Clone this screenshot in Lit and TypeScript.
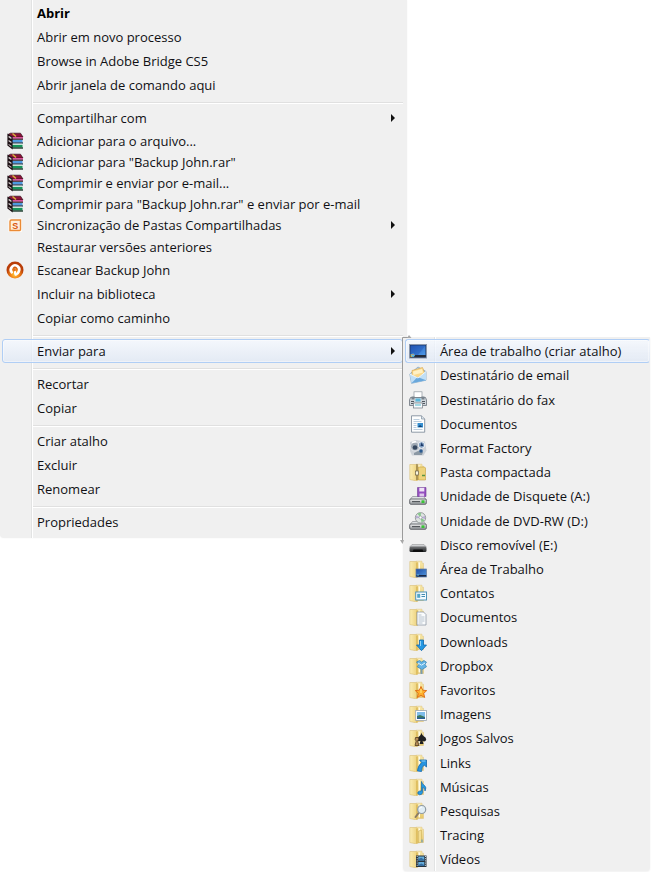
import { LitElement, html, svg, css, nothing } from "lit";
import { customElement, property } from "lit/decorators.js";
import { classMap } from "lit/directives/class-map.js";

interface Item {
  label: string;
  icon?: string;
  bold?: boolean;
  active?: boolean;
  arrow?: boolean;
  size?: "compact" | "medium";
}

const groups: Item[][] = [
  [
    { label: "Abrir", bold: true },
    { label: "Abrir em novo processo" },
    { label: "Browse in Adobe Bridge CS5" },
    { label: "Abrir janela de comando aqui" },
  ],
  [
    { label: "Compartilhar com", arrow: true },
    { label: "Adicionar para o arquivo...", icon: "rar", size: "compact" },
    { label: 'Adicionar para "Backup John.rar"', icon: "rar", size: "compact" },
    { label: "Comprimir e enviar por e-mail...", icon: "rar", size: "compact" },
    { label: 'Comprimir para "Backup John.rar" e enviar por e-mail', icon: "rar", size: "compact" },
    { label: "Sincronização de Pastas Compartilhadas", icon: "sync", arrow: true, size: "compact" },
    { label: "Restaurar versões anteriores", size: "medium" },
    { label: "Escanear Backup John", icon: "avast" },
    { label: "Incluir na biblioteca", arrow: true },
    { label: "Copiar como caminho" },
  ],
  [{ label: "Enviar para", arrow: true, active: true }],
  [{ label: "Recortar" }, { label: "Copiar" }],
  [{ label: "Criar atalho" }, { label: "Excluir" }, { label: "Renomear" }],
  [{ label: "Propriedades" }],
];

const sendTo: Item[] = [
  { label: "Área de trabalho (criar atalho)", icon: "desktop", active: true },
  { label: "Destinatário de email", icon: "mail" },
  { label: "Destinatário do fax", icon: "fax" },
  { label: "Documentos", icon: "document" },
  { label: "Format Factory", icon: "factory" },
  { label: "Pasta compactada", icon: "zip" },
  { label: "Unidade de Disquete (A:)", icon: "floppy" },
  { label: "Unidade de DVD-RW (D:)", icon: "dvd" },
  { label: "Disco removível (E:)", icon: "removable" },
  { label: "Área de Trabalho", icon: "f-desktop" },
  { label: "Contatos", icon: "f-contacts" },
  { label: "Documentos", icon: "f-documents" },
  { label: "Downloads", icon: "f-downloads" },
  { label: "Dropbox", icon: "f-dropbox" },
  { label: "Favoritos", icon: "f-favorites" },
  { label: "Imagens", icon: "f-pictures" },
  { label: "Jogos Salvos", icon: "f-games" },
  { label: "Links", icon: "f-links" },
  { label: "Músicas", icon: "f-music" },
  { label: "Pesquisas", icon: "f-search" },
  { label: "Tracing", icon: "f-plain" },
  { label: "Vídeos", icon: "f-videos" },
];

const gradient = (id: string, from: string, to: string, diagonal = false) => svg`
  <linearGradient id=${id} x1="0" y1="0" x2=${diagonal ? 1 : 0} y2="1">
    <stop offset="0" stop-color=${from} /><stop offset="1" stop-color=${to} />
  </linearGradient>`;

const folder = svg`
  <defs>
    ${gradient("fb", "#f8e9ac", "#e6c768")}
    <linearGradient id="ff"><stop offset="0" stop-color="#fbeeb4" /><stop offset="1" stop-color="#ecd07a" /></linearGradient>
  </defs>
  <path d="M7 1.200h6v2h1.500V16.500H7z" fill="url(#fb)" stroke="#dcc07a" stroke-width=".5" />
  <path d="M9.500 2.500h1.500V15.500H9.500z" fill="#fffbe6" />
  <path d="M.8 1.500h6l1.900 1.200V17.300L6.800 17.800.8 16.500z" fill="url(#ff)" stroke="#d4b666" stroke-width=".5" />
  <path d="M7 3l1.700-.4V17.300L7 17.600z" fill="#dfbf60" />`;

const drive = svg`
  <defs>${gradient("dr", "#f4f4f4", "#8e9296")}</defs>
  <path d="M3.500 9.500h11l3 3.500H.8z" fill="#dfe2e4" stroke="#8a8e92" stroke-width=".7" />
  <rect x=".7" y="12" width="16.600" height="5.300" rx="1.200" fill="url(#dr)" stroke="#5c6064" stroke-width=".9" />
  <path d="M3 14.700h8" stroke="#3c4044" stroke-width="1" />
  <rect x="12.500" y="13.300" width="3" height="2.700" fill="#39c437" />`;

const icons: Record<string, unknown> = {
  rar: svg`
    <path d="M2 2.500L4.500 1.200H14.500L17 5H6z" fill="#8e1238" stroke="#30101c" stroke-width=".7" />
    <path d="M6.500 1.500l3.500 3" stroke="#d8b13a" stroke-width="1.600" />
    <path d="M6 5h11v1.800H6z" fill="#d8549c" />
    <path d="M6 7.200h11" stroke="#241018" stroke-width="1.100" />
    <path d="M6 8h10.500v2.500H6z" fill="#4c9be0" />
    <path d="M6 11h11" stroke="#10203c" stroke-width="1.200" />
    <path d="M6 11.700h10.500v1.200H6z" fill="#d9ede0" />
    <path d="M6 12.900h10.500v2.500H6z" fill="#17945a" />
    <path d="M6 16h11" stroke="#0c2c1c" stroke-width="1.300" />
    <path d="M2 2.500v3.300L6 8.300V5zM2 6.700v3L6 12.300v-3zM2 10.800v2.500l4 3v-2.800z" fill="#cfc6c8" stroke="#1c1014" stroke-width="1.200" />`,
  sync: svg`
    <rect x="2.500" y="2.500" width="13.500" height="13.500" fill="#fffaf4" />
    <path d="M5.500 4H14.500V13.500Q14.500 14.500 13.500 14.500H4V5.500Q4 4 5.500 4z" fill="#fdeedd" stroke="#ea8a35" stroke-width="1.400" />
    <text x="9.300" y="12.600" text-anchor="middle" font-family="Liberation Sans, sans-serif" font-weight="700" font-size="9" fill="#d9560e">S</text>`,
  avast: svg`
    <defs><radialGradient id="av" cx=".5" cy=".75"><stop offset="0" stop-color="#ffd042" /><stop offset=".5" stop-color="#f48618" /><stop offset="1" stop-color="#b93d08" /></radialGradient></defs>
    <circle cx="9" cy="9" r="8.500" fill="url(#av)" />
    <path d="M5.800 11.300A4.200 4.200 0 1 1 12.800 10.500Q12 12.800 9.800 13.500" fill="none" stroke="#fff" stroke-width="2.600" stroke-linecap="round" />
    <path d="M9 8.500V12.500" stroke="#fff" stroke-width="2" stroke-linecap="round" />
    <circle cx="8.500" cy="8.700" r="1.500" fill="#e2701a" />`,
  desktop: svg`
    <defs>${gradient("ds", "#2457b4", "#4f9bea", true)}</defs>
    <rect x=".5" y="2.500" width="17" height="13.500" fill="#1a315c" stroke="#8b97ab" />
    <rect x="1.500" y="3.500" width="15" height="9.500" fill="url(#ds)" />
    <path d="M1.500 3.500h15L9 13H1.500z" fill="#1c4fb4" opacity=".4" />
    <path d="M1.500 13.200h15v2h-15z" fill="#252c38" />
    <path d="M1.500 12.500l1.500-.5v3H1.500z" fill="#e4b536" /><circle cx="4" cy="13.200" r="1.700" fill="#62c4e4" />
    <path d="M3 12.500l1.500-.8v1.600z" fill="#f06838" />`,
  mail: svg`
    <defs>${gradient("ml", "#e4f2fc", "#5e9fd4", true)}</defs>
    <path d="M.8 8L9 1l8 4.500v8.700L2.500 17.300z" fill="url(#ml)" stroke="#7a9ebc" stroke-width=".7" />
    <path d="M3 4.500L13.500 1.500l2 5L9.500 12 3 9.500z" fill="#fbd98c" stroke="#d6a348" stroke-width=".6" />
    <path d="M4 5.500l9-2.500 1 3.500L4.500 9z" fill="#fff1c4" />
    <path d="M.8 8l8.200 4L17 5.500v8.700L2.500 17.300z" fill="#c0dff6" />
    <path d="M2.500 17.300L8.500 11l8.500 3.200z" fill="#6aa8dc" />
    <path d="M.8 8l8.200 4L17 5.500" fill="none" stroke="#f4fbff" stroke-width=".9" />`,
  fax: svg`
    <rect x="5" y=".8" width="8" height="6" fill="#fff" stroke="#8e969e" stroke-width=".7" />
    <path d="M1.500 6.500h15l1 2.500v5.500H.5V9z" fill="#cfd5da" stroke="#6c757e" stroke-width=".8" />
    <path d="M2.500 5.500h3v3h-3zM12.500 5.500h3v3h-3z" fill="#79838d" />
    <rect x="6.500" y="7.500" width="5" height="3" fill="#59b8dc" />
    <path d="M2 10.500h3M13 10.500h3M2 12.500h14" stroke="#50575f" stroke-width="1.200" />
    <rect x="4.500" y="12" width="9" height="5" fill="#f7fafc" stroke="#717a84" stroke-width=".7" />
    <path d="M6 14h6" stroke="#53b7cb" />`,
  document: svg`
    <path d="M2.500.8h10l3.200 3.200v13.200H2.500z" fill="#fdfefe" stroke="#83909d" stroke-width=".9" />
    <path d="M12.500.8V4h3.200" fill="#dae2ea" stroke="#83909d" stroke-width=".7" />
    <path d="M4.500 4.500h6M4.500 6.500h8M4.500 8.500h3M4.500 10.500h3M4.500 12.500h3M4.500 14.500h9" stroke="#abc2d6" stroke-width=".8" />
    <rect x="8.500" y="8" width="5.500" height="4.500" fill="#358fd0" /><path d="M9 12l2-2 2.500 2z" fill="#123f71" />`,
  factory: svg`
    <path d="M1 3l6-2 9 1.500 1.500 9-3 5H3L1 12z" fill="#cdd2d8" />
    <circle cx="6" cy="7.500" r="4.500" fill="#9fa9b4" stroke="#e7eaee" />
    <circle cx="6" cy="8.500" r="2.300" fill="#34475f" />
    <circle cx="12.500" cy="6" r="3.300" fill="#7e9cc0" stroke="#eff2f5" />
    <path d="M12.500 3.500l2 3.500h-3z" fill="#1d3a67" />
    <path d="M5 14l4-2 5 1-1 3H5z" fill="#8b98a4" /><circle cx="12" cy="12" r="1.800" fill="#2b5b90" />
    <path d="M3 3.500l4-1" stroke="#fff" stroke-width="1.500" />`,
  zip: svg`${folder}
    <path d="M9.500 4h6l1 1v12h-7z" fill="#eed37b" stroke="#c29e3c" stroke-width=".6" />
    <path d="M8 1.500V17" stroke="#7b6b44" stroke-width="2" stroke-dasharray="1 1" />
    <rect x="6.600" y="8" width="3" height="4" fill="#f8f4dc" stroke="#6c6146" stroke-width=".7" />
    <path d="M13 12.500h3" stroke="#579346" stroke-width="1.500" />`,
  floppy: svg`${drive}
    <path d="M8.500.5h8.500V9.500h-8.500z" fill="#954fc0" stroke="#6e3a93" stroke-width=".6" />
    <path d="M10.300.8h5v3.700h-5z" fill="#efe4f6" /><path d="M10.500 6.500h4.600v3h-4.600z" fill="#dec8ec" />`,
  dvd: svg`${drive}
    <circle cx="11.500" cy="5.800" r="5.200" fill="#dfe4e2" stroke="#858c8c" stroke-width=".8" />
    <path d="M11.500 5.500L8.500 1.700A5 5 0 0 1 12 .9zM11.500 5.500l4 2.700a5 5 0 0 1-3 2z" fill="#87c98c" />
    <path d="M11.500 5.500l4.500-1.500v3zM11.500 5.500l-4.500 1v-3z" fill="#b8acd4" />
    <circle cx="11.500" cy="5.500" r="1.500" fill="#fff" stroke="#888f92" stroke-width=".6" />`,
  removable: svg`
    <defs>${gradient("rm", "#77797b", "#1f2123")}</defs>
    <path d="M3 8.500h12l2.300 2.500H.7z" fill="#cfd1d3" stroke="#97999b" stroke-width=".6" />
    <rect x=".5" y="10.500" width="17" height="5.500" rx="1.500" fill="url(#rm)" />
    <path d="M4.500 13.500h9l1 2.500h-11z" fill="#0c0d0e" />`,
  "f-plain": svg`${folder}<path d="M9.500 5l3-1v12l-3 1z" fill="#f3dd92" stroke="#cfb058" stroke-width=".6" /><path d="M13 13.500v3" stroke="#77a3b3" stroke-width="1.300" />`,
  "f-desktop": svg`${folder}<defs>${gradient("fd", "#1d4ca4", "#559ae0", true)}</defs><rect x="7" y="9" width="10.500" height="8" fill="url(#fd)" stroke="#62799f" stroke-width=".7" /><path d="M7.500 15.800h9.700" stroke="#1a2845" stroke-width="1.600" /><path d="M8 15h2" stroke="#67c0dc" />`,
  "f-contacts": svg`${folder}<rect x="6.700" y="8" width="10.800" height="8" fill="#f4fbff" stroke="#4e93b8" stroke-width="1" /><rect x="8.200" y="9.800" width="3" height="4" fill="#50a5c8" /><path d="M12.500 10.500h3.500M12.500 12.500h3.500" stroke="#438cb2" />`,
  "f-documents": svg`${folder}<path d="M8 4h6.500L17 6.500V17H8z" fill="#fafcfd" stroke="#909ba6" stroke-width=".8" /><path d="M9.500 7h3M9.500 9h6M9.500 11h6M9.500 13h6M9.500 15h4" stroke="#a7b5c1" stroke-width=".8" />`,
  "f-downloads": svg`${folder}<path d="M10.500 7h4v5h3l-5 5.700-5-5.700h3z" fill="#2698e2" stroke="#1269ae" stroke-width=".8" /><path d="M11.500 8v5" stroke="#8fd2fa" />`,
  "f-dropbox": svg`${folder}<path d="M7.500 5l3-1.500 2.200 1.600L15 3.500l2.500 1.700-1.500 2 1.500 2.500-4.500 3-4.800-3 1.800-2.200z" fill="#64b3e5" stroke="#347fae" stroke-width=".7" /><path d="M9 6l3.500 2.200L16 6" fill="none" stroke="#dff3ff" /><path d="M12.500 12v5" stroke="#7a9db0" stroke-width="2" />`,
  "f-favorites": svg`${folder}<path d="M12 5.500l1.700 3.700 4 .4-3 2.800 1 4.100-3.700-2.200-3.700 2.200 1-4.100-3-2.800 4-.4z" fill="#ffaf2b" stroke="#dd6913" stroke-width=".9" /><path d="M12 8v4" stroke="#ffe074" stroke-width="1.300" />`,
  "f-pictures": svg`${folder}<rect x="6.700" y="5.500" width="10.700" height="10" fill="#fff" stroke="#9ba5ae" stroke-width=".8" /><rect x="8" y="7" width="8" height="7" fill="#7ebcea" /><path d="M8 11l3-1 5 2v2H8z" fill="#3d7a5a" /><path d="M8 12.500h8V14H8z" fill="#275f98" />`,
  "f-games": svg`${folder}<path d="M12.500 3.500Q12.500 6 16.500 8.500 18 10.500 16.500 12 15 13 13.500 11.800L14.500 15h-4l1-3.200Q9 13 8 11.500 7.500 9.500 9 8.500 12.500 6 12.500 3.500z" fill="#1f2022" /><path d="M6.500 8.500h3v2l-1 1.500 1.500 4.500H6l1.200-4.500-1-1.500z" fill="#b58c58" stroke="#503b22" stroke-width=".8" />`,
  "f-links": svg`${folder}<path d="M10.500 6h7v7l-2.300-2Q12.500 13 12.500 17.500L8.500 17Q8.500 12 12.700 8.500z" fill="#2694e0" stroke="#1467aa" stroke-width=".8" /><path d="M12.500 7h4" stroke="#8dd0f7" />`,
  "f-music": svg`${folder}<path d="M12.500 3.500Q13 6 15.500 7.500 18 9.500 16 13 16 9.500 13.700 9.500V14.500Q13 17 10.500 16.800 8 16 9 14 10.500 12.500 12.500 13z" fill="#259be5" stroke="#1868a5" stroke-width=".7" />`,
  "f-search": svg`${folder}<path d="M10 10.500L6.500 15" stroke="#8b7b65" stroke-width="2" stroke-linecap="round" /><circle cx="12.700" cy="7.500" r="4" fill="#e0edf5" stroke="#8f9ba4" stroke-width="1.200" /><path d="M10.500 7q.5-2 2.500-2" fill="none" stroke="#fff" />`,
  "f-videos": svg`${folder}<rect x="7" y="5.500" width="10.500" height="11.500" fill="#28333c" /><path d="M9.300 6.500h6v4h-6zM9.300 12h6v4h-6z" fill="#67aedb" /><path d="M9.300 9l3-1.300 3 2v.8h-6zM9.300 15l3-1.500 3 1.500v1h-6z" fill="#346da0" /><path d="M8.200 6v11M16.500 6v11" stroke="#e3e9ec" stroke-width=".9" stroke-dasharray="1 1.200" />`,
};

@customElement("menu-item")
class MenuItem extends LitElement {
  @property({ attribute: false }) item!: Item;

  static styles = css`
    :host { display: block; }
    .row {
      display: grid;
      grid-template-columns: 18px minmax(0, 1fr) 8px;
      align-items: center;
      column-gap: 13px;
      box-sizing: border-box;
      width: 100%;
      height: 100%;
      padding: 0 5px 0 3px;
      border: 1px solid transparent;
      border-radius: 3px;
      background: none;
      color: #101014;
      font: 13px/18px "Open Sans", "Noto Sans", sans-serif;
      text-align: left;
      white-space: nowrap;
    }
    .active {
      border-color: #b0cef5;
      border-right-color: var(--row-end, #b0cef5);
      background: linear-gradient(rgba(245, 249, 255, 0.8), rgba(219, 230, 247, 0.6));
      box-shadow: inset 0 0 0 1px rgba(255, 255, 255, 0.4);
    }
    .bold { font-weight: 700; color: #000; }
    .icon { display: block; width: 18px; height: 18px; }
    .arrow { display: block; width: 8px; height: 8px; }
  `;

  render() {
    const { label, icon, bold, active, arrow } = this.item;
    return html`<button
      class=${classMap({ row: true, bold: !!bold, active: !!active })}
      role="menuitem"
      aria-haspopup=${arrow ? "menu" : nothing}
    >
      <svg class="icon" viewBox="0 0 18 18" aria-hidden="true">${icon ? icons[icon] : nothing}</svg>
      <span>${label}</span>
      ${arrow ? html`<svg class="arrow" viewBox="0 0 8 8" aria-hidden="true"><path d="M2 0l4 4-4 4z" fill="#111" /></svg>` : nothing}
    </button>`;
  }
}

@customElement("app-root")
class AppRoot extends LitElement {
  static styles = css`
    :host { display: block; min-height: 100vh; background: #fff; }
    .menu {
      box-sizing: border-box;
      background: linear-gradient(90deg, transparent 31px, #e2e3e3 31px 32px, #fff 32px 33px, transparent 33px) #f0f0f0;
    }
    .main {
      width: 62.5vw;
      padding: 1px 4px 4px 2px;
      box-shadow: 0 0 2px #f4f4f4;
      border-radius: 0 0 0 4px;
    }
    .group + .group { margin-top: 4px; padding-top: 3px; }
    .rule {
      height: 1px;
      margin: 5px 0 0 31px;
      border: 0;
      border-bottom: 1px solid #fff;
      background: #e0e0e0;
    }
    .rule + .group { padding-top: 2px; }
    .item { height: 24px; }
    .medium { height: 23px; }
    .compact { height: 21px; }
    .parent { position: relative; }
    .sub {
      --row-end: transparent;
      position: absolute;
      z-index: 1;
      top: -2px;
      left: 100%;
      width: 38vw;
      padding: 2px 0 0 2px;
      border-radius: 0 0 4px 4px;
      box-shadow: 0 1px 2px #f0f0f0;
    }
    .sub .item:nth-of-type(5n + 3) { height: 25px; }
    .edge { position: absolute; top: -2px; left: -3px; width: 12px; height: 210px; }
  `;

  private submenu() {
    return html`<div class="menu sub" role="menu" aria-label="Enviar para">
      <svg class="edge" viewBox="0 0 12 210" aria-hidden="true">
        <path d="M2.500 206V2.500H10" fill="none" stroke="#9b9b9b" />
        <path d="M9 0l2.500 3H7zM0 205h4l-1.500 4z" fill="#a8a8a8" />
      </svg>
      ${sendTo.map((item) => html`<menu-item class="item" .item=${item}></menu-item>`)}
    </div>`;
  }

  render() {
    return html`<div class="menu main" role="menu">
      ${groups.map(
        (group, i) => html`${i ? html`<hr class="rule" />` : nothing}
          <div class="group" role="group">
            ${group.map(
              (item) => html`<div class=${classMap({ parent: !!item.active })}>
                <menu-item class="item ${item.size ?? ""}" .item=${item}></menu-item>
                ${item.active ? this.submenu() : nothing}
              </div>`,
            )}
          </div>`,
      )}
    </div>`;
  }
}
